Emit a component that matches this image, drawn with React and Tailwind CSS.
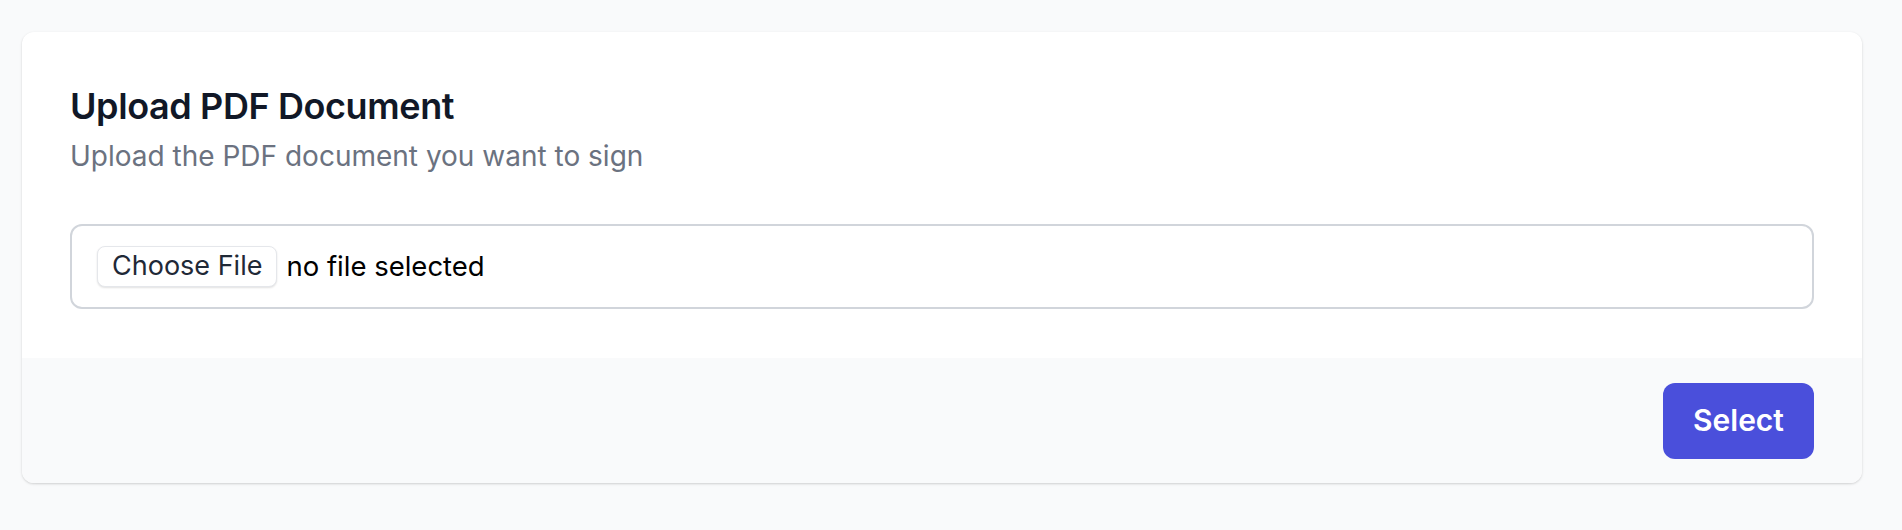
export default function App() {
  return (
    <div className="min-h-screen bg-[#f9fafb] pl-[22px] pr-[40px] pt-[32px] pb-[47px] font-['Inter','Noto_Sans',sans-serif]">
      <div className="bg-white rounded-[12px] shadow-[0_1px_3px_rgba(0,0,0,0.12),0_1px_2px_rgba(0,0,0,0.06)] overflow-hidden">
        <div className="px-[48px] pt-[46px] pb-[49px]">
          <h2 className="text-[36px] leading-[56px] font-semibold text-[#111827] tracking-[-0.4px]">Upload PDF Document</h2>
          <p className="mt-[2px] text-[28px] leading-[40px] text-[#6b7280]">Upload the PDF document you want to sign</p>
          <div className="mt-[48px] h-[85px] border-2 border-[#d1d5db] rounded-[12px] flex items-center pl-[25px]">
            <span className="h-[41px] px-[14px] flex items-center border border-[#e5e7eb] rounded-[8px] shadow-[0_1px_2px_rgba(0,0,0,0.12)] text-[27px] text-[#1f2937] bg-white">Choose File</span>
            <span className="ml-[9px] text-[27.5px] text-black">no file selected</span>
          </div>
        </div>
        <div className="bg-[#f9fafb] h-[125px] px-[48px] flex items-center justify-end">
          <button className="w-[151px] h-[76px] rounded-[12px] bg-[#4a4fdb] text-white text-[30px] font-semibold">Select</button>
        </div>
      </div>
    </div>
  )
}
